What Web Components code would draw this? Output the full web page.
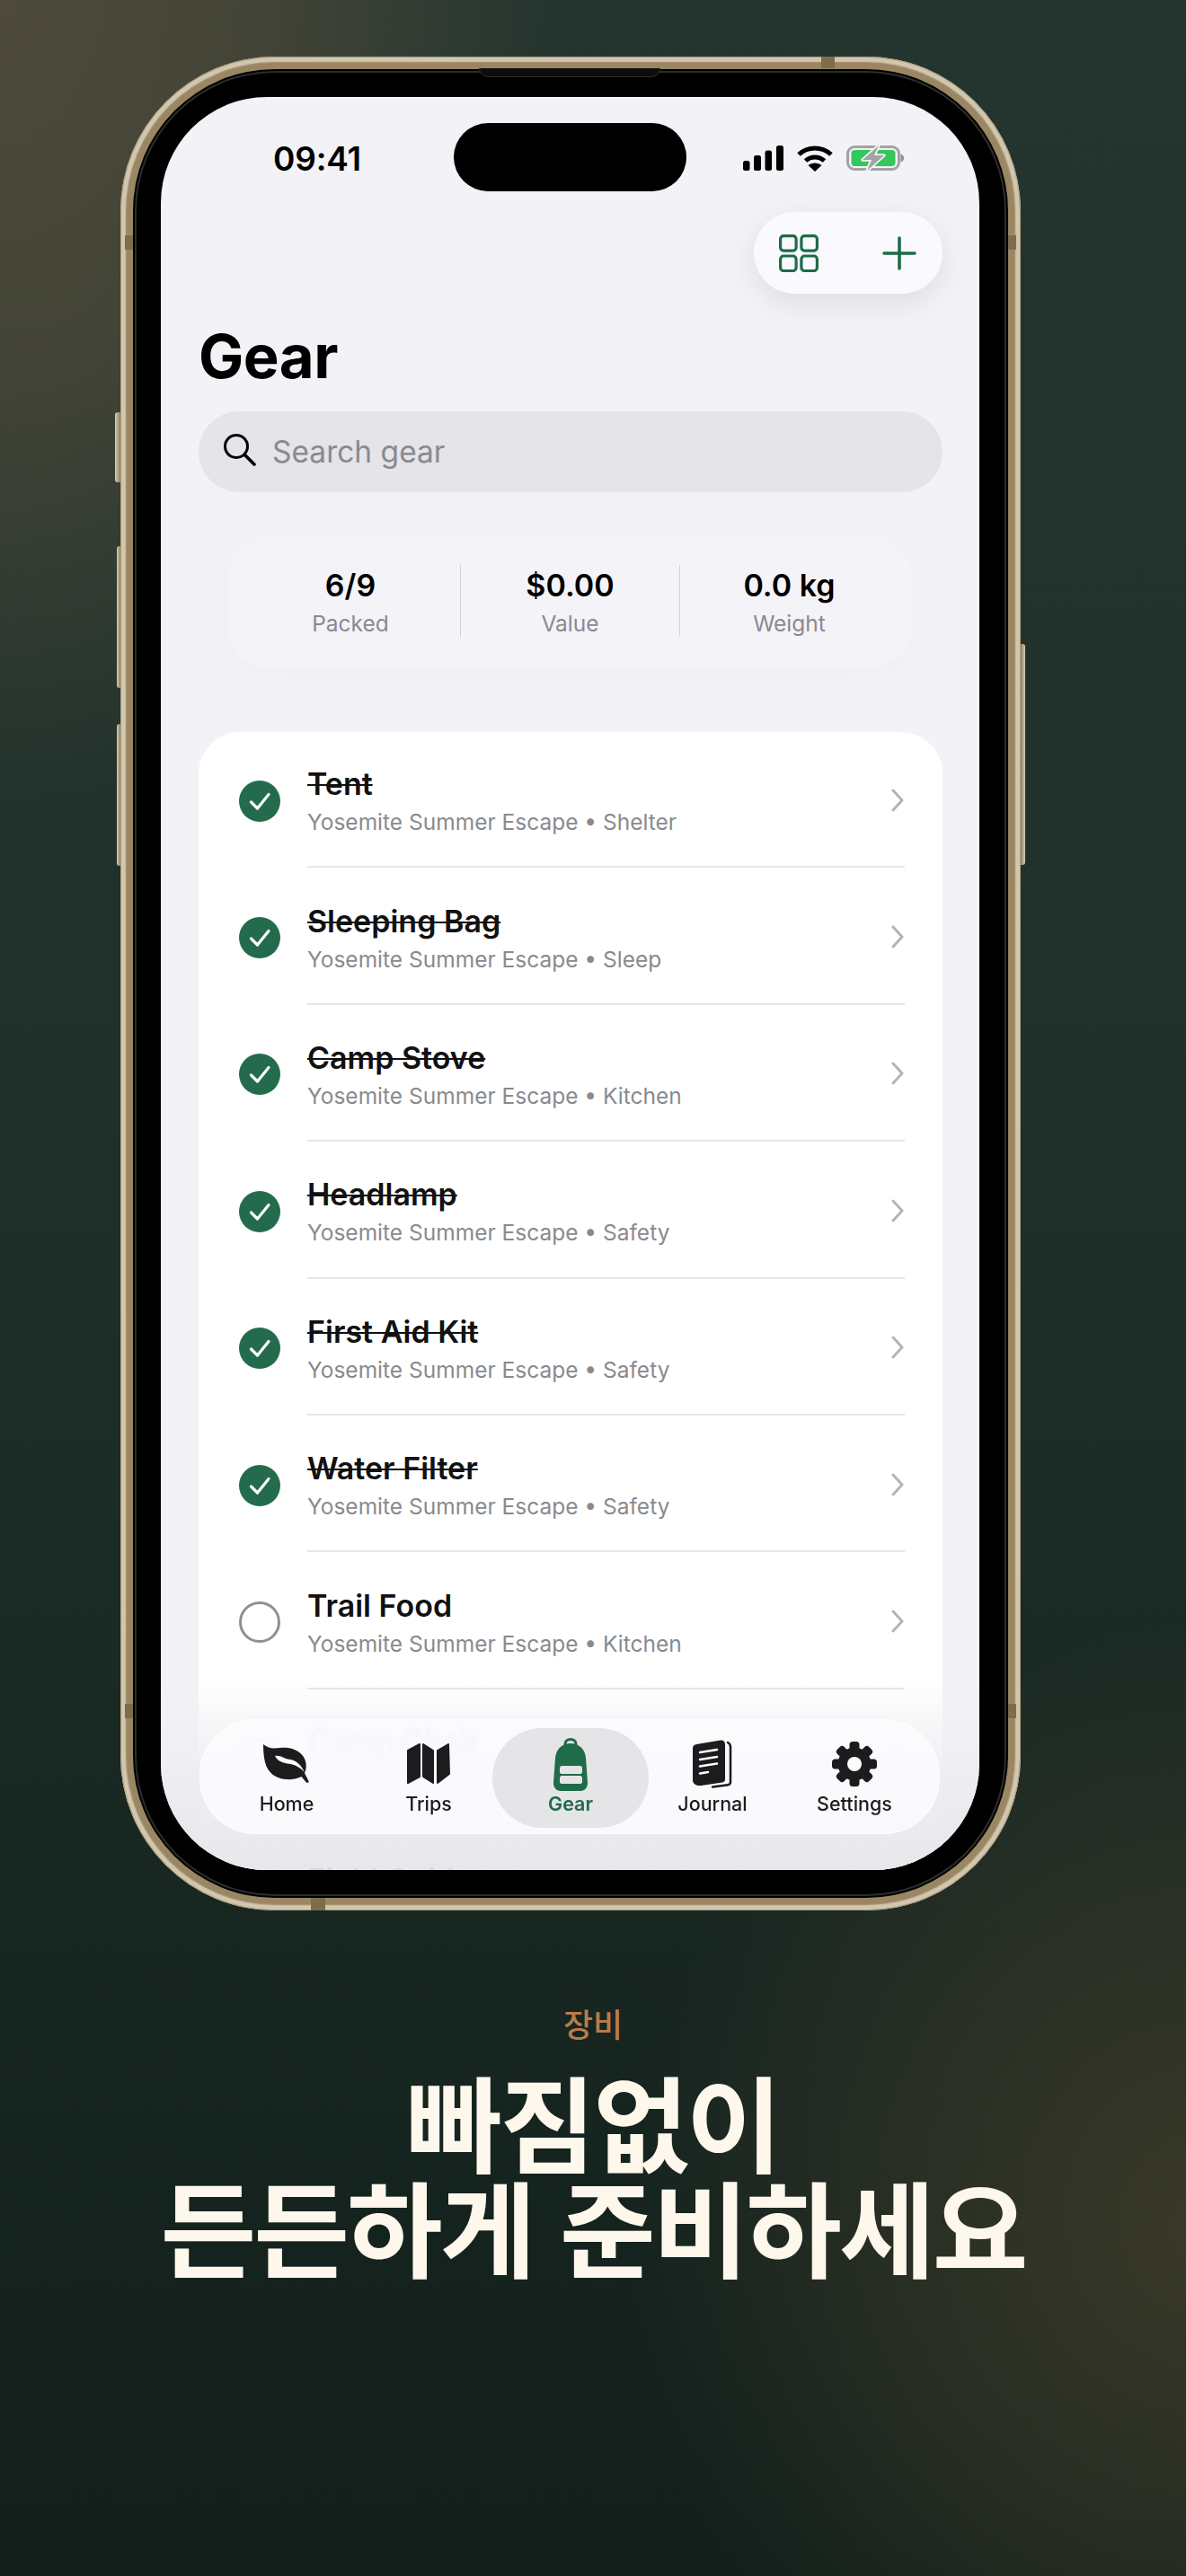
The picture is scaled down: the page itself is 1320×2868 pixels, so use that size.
<!DOCTYPE html>
<html lang="ko">
<head>
<meta charset="utf-8">
<title>Gear</title>
<style>
  html, body { margin: 0; padding: 0; }
  body {
    width: 1320px;
    height: 2868px;
    overflow: hidden;
    font-family: Inter, "Liberation Sans", sans-serif;
    background:
      radial-gradient(ellipse 620px 900px at 0 0, #4e4a3a 0, rgba(78,74,58,.75) 45%, rgba(78,74,58,0) 100%),
      radial-gradient(ellipse 640px 680px at 1340px 2480px, #3a3929 0, rgba(58,57,41,.55) 50%, rgba(58,57,41,0) 100%),
      linear-gradient(to bottom, #24352f 0, #20312b 1100px, #182722 2100px, #121f1b 2868px);
  }
</style>
</head>
<body>

<phone-frame>
  <status-bar></status-bar>
  <action-pill></action-pill>
  <page-title>Gear</page-title>
  <search-bar>Search gear</search-bar>
  <stat-strip>
    <stat-item label="Packed">6/9</stat-item>
    <stat-item label="Value">$0.00</stat-item>
    <stat-item label="Weight">0.0 kg</stat-item>
  </stat-strip>
  <gear-list>
    <gear-row checked>Tent<span slot="sub">Yosemite Summer Escape • Shelter</span></gear-row>
    <gear-row checked>Sleeping Bag<span slot="sub">Yosemite Summer Escape • Sleep</span></gear-row>
    <gear-row checked>Camp Stove<span slot="sub">Yosemite Summer Escape • Kitchen</span></gear-row>
    <gear-row checked>Headlamp<span slot="sub">Yosemite Summer Escape • Safety</span></gear-row>
    <gear-row checked>First Aid Kit<span slot="sub">Yosemite Summer Escape • Safety</span></gear-row>
    <gear-row checked>Water Filter<span slot="sub">Yosemite Summer Escape • Safety</span></gear-row>
    <gear-row>Trail Food<span slot="sub">Yosemite Summer Escape • Kitchen</span></gear-row>
    <gear-row lensed>Camp Chair<span slot="sub">Yosemite Summer Escape • Comfort</span></gear-row>
    <gear-row>Field Guide<span slot="sub">Yosemite Summer Escape • Comfort</span></gear-row>
  </gear-list>
  <tab-bar slot="overlay">
    <tab-item>Home
      <svg slot="icon" width="52" height="44" viewBox="0 0 52 44">
        <path fill="#1c1c1e" d="M0 0C4 3 8 4.500 12 4.500C18 4.500 21 3.500 27 4C37 5 46 11 47.500 21C48 26 47.500 29 46 32L50.500 41C51 43 48.500 43.500 47.500 42L42.500 36C36 39 30 39.500 25 39C14 38 5 32 2 20C0.500 14 0 6 0 0Z"/>
        <path fill="#fcfcfe" d="M13 13C20 12 22 16 30 17C37 18 42 23 46 31C41 26 36 23 29 21.800C22 20.800 16 19 13 13Z"/>
      </svg>
    </tab-item>
    <tab-item>Trips
      <svg slot="icon" width="50" height="46" viewBox="0 0 50 46" fill="#1c1c1e" stroke="#1c1c1e" stroke-width="2" stroke-linejoin="round">
        <path d="M2 8L15 1V37L2 44Z"/>
        <path d="M19 1L30 8V44L19 37Z"/>
        <path d="M35 8L47 1L48 34L35 44Z"/>
      </svg>
    </tab-item>
    <tab-item active>Gear
      <svg slot="icon" width="38" height="59" viewBox="0 0 38 59">
        <path fill="none" stroke="#1f6b4a" stroke-width="3" d="M13 10V7C13 3.500 15.500 1.500 19 1.500C22.500 1.500 25 3.500 25 7V10"/>
        <path fill="#1f6b4a" d="M19 6C28 6 35 12 36 22L38 50C38 55 35 59 30 59H8C3 59 0 55 0 50L2 22C3 12 10 6 19 6Z"/>
        <rect x="7" y="31" width="25" height="9" rx="2.500" fill="#e5e5e8"/>
        <rect x="7" y="42" width="25" height="9" rx="2.500" fill="#e5e5e8"/>
      </svg>
    </tab-item>
    <tab-item>Journal
      <svg slot="icon" width="44" height="54" viewBox="0 0 44 54">
        <path fill="#1c1c1e" d="M4 5L31 0.500C34 0 36 2 36 5V44C36 46 35 47 33 47.500L9 51C4 51.500 0 49 0 45V9C0 7 2 5.500 4 5Z"/>
        <path fill="none" stroke="#1c1c1e" stroke-width="2.500" stroke-linecap="round" d="M39 3C41 4 42 5.500 42 8V47C42 49 41 50 39 50.300L22 52.500"/>
        <path fill="none" stroke="#fcfcfe" stroke-width="2.600" stroke-linecap="round" d="M8 14L27 11M8 22L27 19M8 29.500L27 26.500M8 37.500L17 36"/>
      </svg>
    </tab-item>
    <tab-item>Settings
      <svg slot="icon" width="52" height="52" viewBox="-26 -26 52 52" fill="#1c1c1e">
        <circle r="18.500"/>
        <rect x="-5.500" y="-25" width="11" height="12" rx="3.500"/>
        <rect x="-5.500" y="-25" width="11" height="12" rx="3.500" transform="rotate(45)"/>
        <rect x="-5.500" y="-25" width="11" height="12" rx="3.500" transform="rotate(90)"/>
        <rect x="-5.500" y="-25" width="11" height="12" rx="3.500" transform="rotate(135)"/>
        <rect x="-5.500" y="-25" width="11" height="12" rx="3.500" transform="rotate(180)"/>
        <rect x="-5.500" y="-25" width="11" height="12" rx="3.500" transform="rotate(225)"/>
        <rect x="-5.500" y="-25" width="11" height="12" rx="3.500" transform="rotate(270)"/>
        <rect x="-5.500" y="-25" width="11" height="12" rx="3.500" transform="rotate(315)"/>
        <circle r="8" fill="#fcfcfe"/>
      </svg>
    </tab-item>
  </tab-bar>
</phone-frame>

<promo-caption eyebrow="장비">
  빠짐없이<br>든든하게 준비하세요
</promo-caption>

<script>
class PhoneFrame extends HTMLElement {
  constructor() {
    super();
    this.attachShadow({mode: 'open'}).innerHTML = `
      <style>
        :host {
          display: block;
          position: relative;
          box-sizing: border-box;
          width: 1002px;
          height: 2064px;
          margin: 63px 0 0 134px;
          padding: 45px 46px 45px 45px;
          border-radius: 172px;
          background: #000;
          box-shadow:
            inset 0 0 1px 1px #a89a7a,
            inset 0 0 1.5px 6px #d2c8b0,
            inset 0 0 0 14px #9a8662,
            inset 0 0 0 16px #000,
            inset 0 0 0 18px #2c2c2e;
        }
        .screen {
          position: relative;
          height: 1974px;
          overflow: hidden;
          border-radius: 118px;
          background: #f2f2f7;
        }
        .fade {
          position: absolute;
          left: 0;
          right: 0;
          bottom: 0;
          height: 212px;
          background: linear-gradient(to bottom, rgba(242,242,246,0) 0, rgba(240,240,244,.5) 20%, rgba(238,238,242,.85) 45%, rgba(230,230,234,.93) 100%);
        }
        .speaker {
          position: absolute;
          top: 13px;
          left: 399px;
          width: 202px;
          height: 10px;
          box-sizing: border-box;
          background: #0d0d0e;
          border: 1px solid #2c2c2e;
          border-top: 0;
          border-radius: 0 0 10px 10px;
        }
        .island {
          position: absolute;
          top: 74px;
          left: 371px;
          width: 259px;
          height: 76px;
          border-radius: 38px;
          background: #000;
        }
        .btn {
          position: absolute;
          background: linear-gradient(to right, #d6ccb4, #8f7e5c);
          border-radius: 3px 0 0 3px;
        }
        .mute { left: -6px; top: 396px; width: 6px; height: 78px; }
        .up { left: -4px; top: 545px; width: 4px; height: 158px; }
        .down { left: -4px; top: 743px; width: 4px; height: 158px; }
        .power {
          left: 1002px; top: 654px; width: 5px; height: 246px;
          border-radius: 0 3px 3px 0;
          background: linear-gradient(to left, #d6ccb4, #8f7e5c);
        }
        .band { position: absolute; background: #7d6c4d; }
      </style>
      <i class="btn mute"></i><i class="btn up"></i><i class="btn down"></i><i class="btn power"></i>
      <i class="band" style="left:780px;top:0;width:15px;height:13px"></i>
      <i class="band" style="left:212px;bottom:0;width:16px;height:14px"></i>
      <i class="band" style="left:5px;top:199px;width:9px;height:16px"></i>
      <i class="band" style="right:5px;top:199px;width:9px;height:16px"></i>
      <i class="band" style="left:5px;top:1834px;width:9px;height:16px"></i>
      <i class="band" style="right:5px;top:1834px;width:9px;height:16px"></i>
      <i class="speaker"></i>
      <div class="screen">
        <slot></slot>
        <div class="fade"></div>
        <slot name="overlay"></slot>
      </div>
      <i class="island"></i>
    `;
  }
}

class StatusBar extends HTMLElement {
  constructor() {
    super();
    this.attachShadow({mode: 'open'}).innerHTML = `
      <style>
        :host {
          display: flex;
          align-items: center;
          justify-content: space-between;
          box-sizing: border-box;
          height: 128px;
          padding: 24px 84px 16px 125px;
          color: #000;
        }
        .time { font: 600 37px/1 Inter, "Liberation Sans", sans-serif; letter-spacing: -.2px; }
        .icons { display: flex; align-items: center; gap: 15px; margin-top: -1px; }
        svg { display: block; }
      </style>
      <span class="time">09:41</span>
      <div class="icons">
        <svg width="46" height="30" viewBox="0 0 46 30" fill="#000">
          <rect x="1" y="18" width="7.500" height="11" rx="2.500"/>
          <rect x="13" y="12" width="8" height="17" rx="2.500"/>
          <rect x="25.500" y="6.500" width="7.500" height="22.500" rx="2.500"/>
          <rect x="38" y="1" width="8" height="28" rx="2.500"/>
        </svg>
        <svg width="40" height="30" viewBox="0 0 40 30" fill="none" stroke="#000" stroke-width="5">
          <path d="M2 11C12 1.500 28 1.500 38 11"/>
          <path d="M9.500 18C15.500 12.500 24.500 12.500 30.500 18"/>
          <path d="M20 30L12.500 23C16.500 19.500 23.500 19.500 27.500 23Z" fill="#000" stroke="none"/>
        </svg>
        <svg width="64" height="30" viewBox="0 0 64 30">
          <rect x="1.500" y="2.500" width="57" height="25" rx="7.500" fill="#f2f2f7" stroke="#a3a3a6" stroke-width="3"/>
          <rect x="5.500" y="6" width="49" height="18" rx="4" fill="#34c759"/>
          <path d="M60.500 10.500C63 11.500 64 13 64 15C64 17 63 18.500 60.500 19.500Z" fill="#8e8e93"/>
          <path d="M36 1L18 17H28L23 29L42 12H31Z" fill="#a3a3a6" stroke="#f2f2f7" stroke-width="3.500" stroke-linejoin="round" paint-order="stroke"/>
        </svg>
      </div>
    `;
  }
}

class ActionPill extends HTMLElement {
  constructor() {
    super();
    this.attachShadow({mode: 'open'}).innerHTML = `
      <style>
        :host {
          display: flex;
          align-items: center;
          box-sizing: border-box;
          width: 210px;
          height: 91px;
          margin-left: 660px;
          padding: 0 29px 0 28px;
          justify-content: space-between;
          border-radius: 46px;
          background: #fafafe;
          box-shadow: 0 10px 34px rgba(0,0,0,.09);
        }
        svg { display: block; }
      </style>
      <svg width="44" height="42" viewBox="0 0 44 42" fill="none" stroke="#1f6b4a" stroke-width="3.200">
        <rect x="1.600" y="1.600" width="17.500" height="16.500" rx="3.500"/>
        <rect x="24.900" y="1.600" width="17.500" height="16.500" rx="3.500"/>
        <rect x="1.600" y="24" width="17.500" height="16.500" rx="3.500"/>
        <rect x="24.900" y="24" width="17.500" height="16.500" rx="3.500"/>
      </svg>
      <svg width="38" height="38" viewBox="0 0 38 38" fill="none" stroke="#1f6b4a" stroke-width="3.600" stroke-linecap="round">
        <path d="M19 2V36M2 19H36"/>
      </svg>
    `;
  }
}

class PageTitle extends HTMLElement {
  constructor() {
    super();
    this.attachShadow({mode: 'open'}).innerHTML = `
      <style>
        :host {
          display: block;
          margin: 30px 0 21px 42px;
          font: 700 67px/80px Inter, "Liberation Sans", sans-serif;
          color: #000;
          letter-spacing: -.5px;
        }
      </style>
      <slot></slot>
    `;
  }
}

class SearchBar extends HTMLElement {
  constructor() {
    super();
    this.attachShadow({mode: 'open'}).innerHTML = `
      <style>
        :host {
          display: flex;
          align-items: center;
          gap: 18px;
          box-sizing: border-box;
          height: 90px;
          margin: 0 41px 0 42px;
          padding: 2px 0 0 28px;
          border-radius: 45px;
          background: #e4e4e9;
          font: 400 33.500px/1 Inter, "Liberation Sans", sans-serif;
          color: #8a8a8e;
        }
        svg { display: block; margin-top: -6px; }
      </style>
      <svg width="36" height="36" viewBox="0 0 36 36" fill="none" stroke="#000" stroke-width="3" stroke-linecap="round">
        <circle cx="14" cy="14" r="12.500"/>
        <path d="M23.500 23.500L34 34" stroke-width="3.600"/>
      </svg>
      <slot></slot>
    `;
  }
}

class StatStrip extends HTMLElement {
  constructor() {
    super();
    this.attachShadow({mode: 'open'}).innerHTML = `
      <style>
        :host {
          display: flex;
          box-sizing: border-box;
          height: 147px;
          margin: 48px 75px 0 75px;
          padding: 33px 14px 34px;
          border-radius: 46px;
          background: #f4f3f8;
          box-shadow: 0 0 0 1px rgba(245,244,248,.6), 0 4px 30px rgba(0,0,0,.025);
        }
      </style>
      <slot></slot>
    `;
  }
}

class StatItem extends HTMLElement {
  constructor() {
    super();
    this.attachShadow({mode: 'open'}).innerHTML = `
      <style>
        :host {
          display: flex;
          flex-direction: column;
          align-items: center;
          flex: 0 0 244px;
          box-sizing: border-box;
          border-left: 1px solid #d2d2d6;
        }
        :host(:first-child) { border-left: 0; }
        .value { font: 600 34px/44px Inter, "Liberation Sans", sans-serif; color: #000; margin-top: 1px; }
        .label { font: 400 24.500px/34px Inter, "Liberation Sans", sans-serif; color: #8a8a8e; margin-top: 3px; }
      </style>
      <div class="value"><slot></slot></div>
      <div class="label"></div>
    `;
    this.shadowRoot.querySelector('.label').textContent = this.getAttribute('label');
  }
}

class GearList extends HTMLElement {
  constructor() {
    super();
    this.attachShadow({mode: 'open'}).innerHTML = `
      <style>
        :host {
          display: block;
          margin: 72px 41px 0 42px;
          border-radius: 46px;
          background: #fff;
          overflow: hidden;
        }
        .rows { margin-top: -1px; }
      </style>
      <div class="rows"><slot></slot></div>
    `;
  }
}

class GearRow extends HTMLElement {
  constructor() {
    super();
    const checked = this.hasAttribute('checked');
    const mark = checked
      ? `<svg width="46" height="46" viewBox="0 0 46 46"><circle cx="23" cy="23" r="23" fill="#236b4c"/><path d="M13.500 24L20.500 31L33 15.500" fill="none" stroke="#fff" stroke-width="3.200" stroke-linecap="round" stroke-linejoin="round"/></svg>`
      : `<svg width="46" height="46" viewBox="0 0 46 46"><circle cx="23" cy="23" r="21.500" fill="none" stroke="#8e8e93" stroke-width="3"/></svg>`;
    this.attachShadow({mode: 'open'}).innerHTML = `
      <style>
        :host {
          display: flex;
          align-items: center;
          box-sizing: border-box;
          height: 152.400px;
          padding: 3px 0 0 45px;
        }
        svg { display: block; flex: none; }
        .body {
          flex: 1;
          display: flex;
          align-items: center;
          justify-content: space-between;
          align-self: stretch;
          margin-left: 30px;
          margin-right: 42px;
          border-bottom: 2px solid #e6e6e8;
        }
        :host(:last-child) .body { border-bottom: 0; }
        .text { padding-top: 3px; }
        .title {
          font: 600 34px/42px Inter, "Liberation Sans", sans-serif;
          color: #111;
        }
        :host([checked]) .title { text-decoration: line-through; text-decoration-thickness: 2px; }
        :host([lensed]) .title { transform: scaleY(1.3); color: #9a9a9e; font-weight: 500; }
        :host([lensed]) .sub { color: #b8b8bc; }
        .sub {
          font: 400 24.500px/34px Inter, "Liberation Sans", sans-serif;
          color: #8a8a8e;
          margin-top: 4px;
        }
      </style>
      ${mark}
      <div class="body">
        <div class="text">
          <div class="title"><slot></slot></div>
          <div class="sub"><slot name="sub"></slot></div>
        </div>
        <svg width="14" height="26" viewBox="0 0 14 26" fill="none" stroke="#b4b4b8" stroke-width="3" stroke-linecap="round" stroke-linejoin="round" style="margin-right:1px">
          <path d="M2 2L12 13L2 24"/>
        </svg>
      </div>
    `;
  }
}

class TabBar extends HTMLElement {
  constructor() {
    super();
    this.attachShadow({mode: 'open'}).innerHTML = `
      <style>
        :host {
          position: absolute;
          left: 43px;
          bottom: 40px;
          display: flex;
          box-sizing: border-box;
          width: 824px;
          height: 128px;
          padding: 19px 17px 0;
          border-radius: 62px;
          background: rgba(252,252,255,.86);
          border: 1px solid rgba(255,255,255,.9);
          -webkit-backdrop-filter: blur(2px);
          backdrop-filter: blur(2px);
        }
      </style>
      <slot></slot>
    `;
  }
}

class TabItem extends HTMLElement {
  constructor() {
    super();
    this.attachShadow({mode: 'open'}).innerHTML = `
      <style>
        :host {
          position: relative;
          display: flex;
          flex-direction: column;
          align-items: center;
          flex: 0 0 158px;
          font: 500 21.500px/26px Inter, "Liberation Sans", sans-serif;
          color: #1c1c1e;
        }
        :host([active]) { color: #1f6b4a; font-weight: 600; }
        .pill {
          display: none;
          position: absolute;
          top: -10px;
          left: -8px;
          right: -8px;
          height: 111px;
          border-radius: 56px;
          background: #e5e5e8;
        }
        :host([active]) .pill { display: block; }
        .icon {
          position: relative;
          display: flex;
          align-items: center;
          justify-content: center;
          height: 60px;
          margin-bottom: 1px;
        }
        .label { position: relative; }
        ::slotted(svg) { display: block; }
      </style>
      <i class="pill"></i>
      <div class="icon"><slot name="icon"></slot></div>
      <div class="label"><slot></slot></div>
    `;
  }
}

class PromoCaption extends HTMLElement {
  constructor() {
    super();
    this.attachShadow({mode: 'open'}).innerHTML = `
      <style>
        :host {
          display: block;
          margin-top: 103px;
          text-align: center;
          font-family: "Noto Sans CJK KR", "Noto Sans", sans-serif;
        }
        .eyebrow { font-size: 36px; line-height: 44px; font-weight: 500; color: #b97b4b; }
        .head {
          margin-top: 27px;
          font-size: 116px;
          line-height: 117px;
          font-weight: 700;
          letter-spacing: -3px;
          color: #fdf7ec;
        }
      </style>
      <div class="eyebrow"></div>
      <div class="head"><slot></slot></div>
    `;
    this.shadowRoot.querySelector('.eyebrow').textContent = this.getAttribute('eyebrow');
  }
}

customElements.define('phone-frame', PhoneFrame);
customElements.define('status-bar', StatusBar);
customElements.define('action-pill', ActionPill);
customElements.define('page-title', PageTitle);
customElements.define('search-bar', SearchBar);
customElements.define('stat-strip', StatStrip);
customElements.define('stat-item', StatItem);
customElements.define('gear-list', GearList);
customElements.define('gear-row', GearRow);
customElements.define('tab-bar', TabBar);
customElements.define('tab-item', TabItem);
customElements.define('promo-caption', PromoCaption);
</script>
</body>
</html>
